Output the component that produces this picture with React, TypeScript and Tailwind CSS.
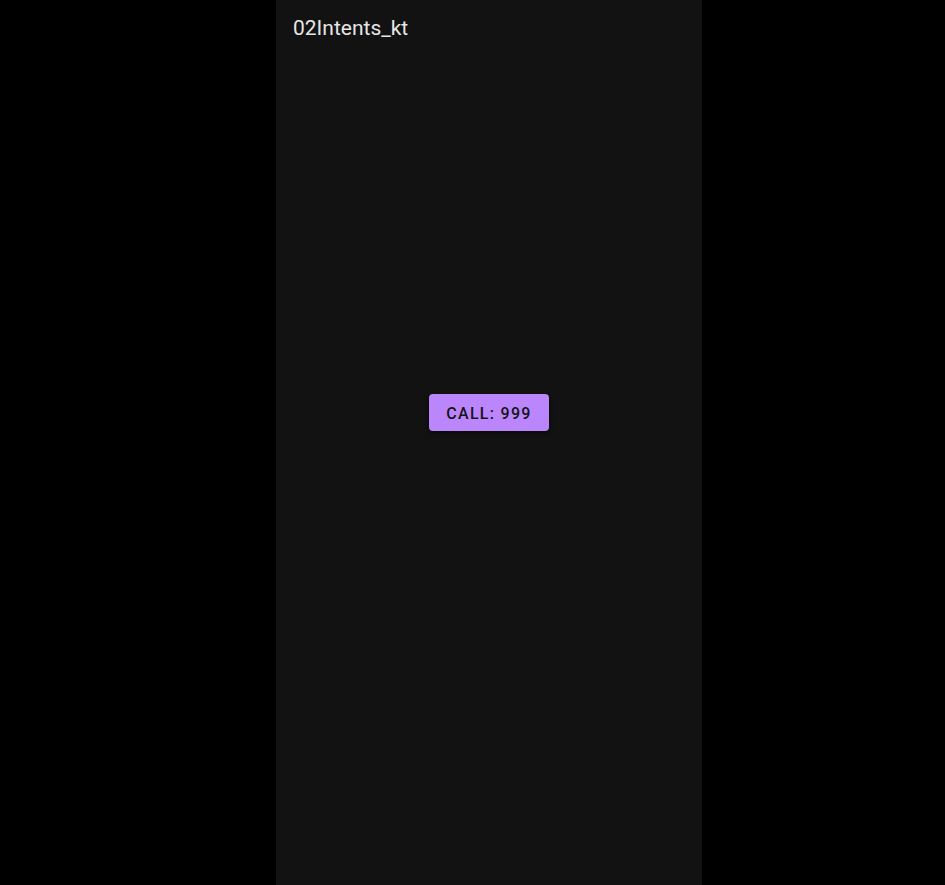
import React from "react";

export default function App() {
  return (
    <div className="w-[945px] h-[885px] bg-black flex overflow-hidden" style={{ fontFamily: "Roboto, 'Noto Sans', sans-serif" }}>
      <div className="ml-[276px] w-[426px] h-full bg-[#121212] flex flex-col">
        <div className="h-[56px] pl-[17px] pt-[14px]">
          <span className="text-[21px] leading-[28px] text-[#e6e6e6]">02Intents_kt</span>
        </div>
        <div className="flex justify-center pt-[338px]">
          <button className="w-[120px] h-[37px] pt-[2px] rounded-[4px] bg-[#bb86fc] text-[#141414] text-[16px] font-medium tracking-[1.3px] shadow-[0_2px_4px_rgba(0,0,0,0.6)]">
            CALL: 999
          </button>
        </div>
      </div>
    </div>
  );
}
